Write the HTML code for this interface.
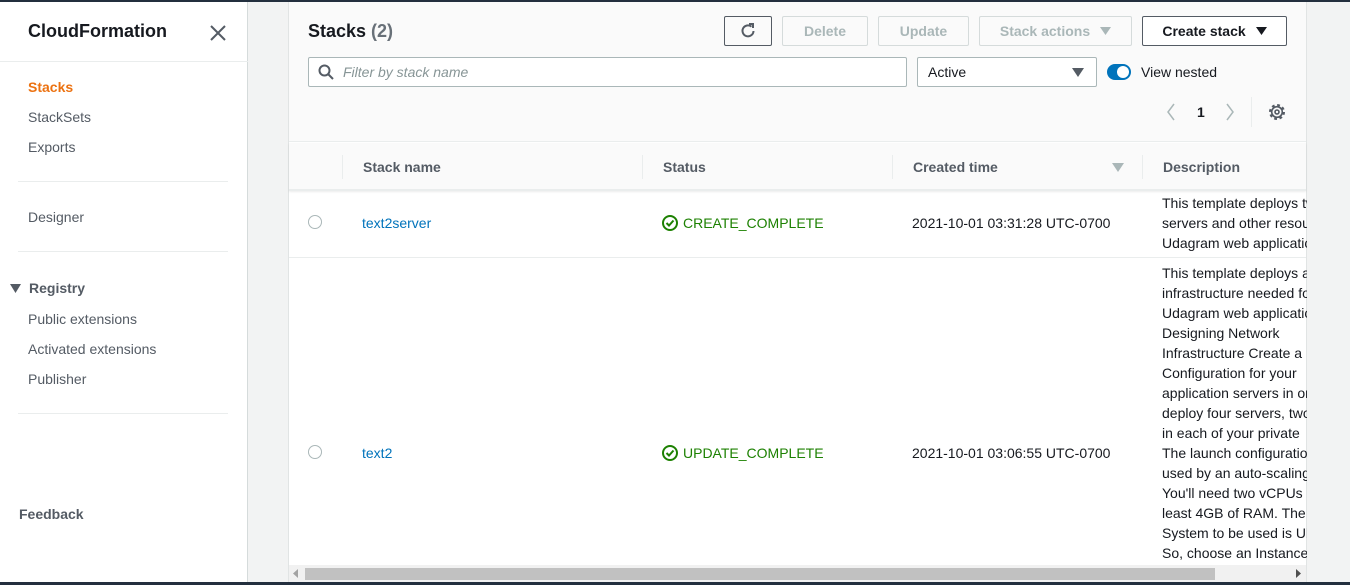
<!DOCTYPE html>
<html><head><meta charset="utf-8"><style>
*{box-sizing:border-box;margin:0;padding:0}
body{width:1350px;height:585px;overflow:hidden;background:#f2f3f3;font-family:"Liberation Sans",sans-serif;font-size:14px;color:#16191f;position:relative}
.a{position:absolute;white-space:nowrap}
.nav{color:#545b64}
.btn{position:absolute;top:16px;height:30px;border:1px solid #d5dbdb;border-radius:2px;font-weight:bold;color:#aab7b8;text-align:center;line-height:28px;background:#fafafa}
.btn svg.tri{vertical-align:middle;margin-left:10px;margin-top:-2px}
.desc{position:absolute;left:1162px;width:145px;overflow:hidden;white-space:nowrap;line-height:20px;color:#16191f}
</style></head><body>
<div class="a" style="left:0;top:0;width:1350px;height:2px;background:#232f3e"></div>
<div class="a" style="left:0;top:2px;width:248px;height:580px;background:#fff;border-right:1px solid #d5dbdb"></div>
<div class="a" style="left:28px;top:21px;font-size:18px;font-weight:bold">CloudFormation</div>
<svg class="a" style="left:210px;top:25px" width="16" height="16"><path d="M1 1L15 15M15 1L1 15" stroke="#545b64" stroke-width="2"/></svg>
<div class="a" style="left:0;top:61px;width:248px;height:1px;background:#eaeded"></div>
<div class="a" style="left:28px;top:79px;color:#ec7211;font-weight:bold">Stacks</div>
<div class="a nav" style="left:28px;top:109px">StackSets</div>
<div class="a nav" style="left:28px;top:139px">Exports</div>
<div class="a" style="left:18px;top:181px;width:210px;height:1px;background:#eaeded"></div>
<div class="a nav" style="left:28px;top:209px">Designer</div>
<div class="a" style="left:18px;top:251px;width:210px;height:1px;background:#eaeded"></div>
<svg class="a" style="left:10px;top:284px" width="11" height="9"><path d="M0 0H11L5.5 9Z" fill="#545b64"/></svg>
<div class="a" style="left:29px;top:280px;font-weight:bold;color:#545b64">Registry</div>
<div class="a nav" style="left:28px;top:311px">Public extensions</div>
<div class="a nav" style="left:28px;top:341px">Activated extensions</div>
<div class="a nav" style="left:28px;top:371px">Publisher</div>
<div class="a" style="left:18px;top:413px;width:210px;height:1px;background:#eaeded"></div>
<div class="a" style="left:19px;top:506px;font-weight:bold;color:#545b64">Feedback</div>

<div class="a" style="left:288px;top:2px;width:1019px;height:580px;background:#fff;border-left:1px solid #e1e4e4;border-right:1px solid #e1e4e4"></div>
<div class="a" style="left:289px;top:2px;width:1017px;height:140px;background:#fafafa;border-bottom:1px solid #eaeded"></div>
<div class="a" style="left:308px;top:21px;font-size:18px;font-weight:bold">Stacks <span style="color:#687078">(2)</span></div>
<div class="btn" style="left:724px;width:48px;border-color:#545b64;color:#545b64"><svg width="18" height="18" style="margin-top:5px" viewBox="0 0 18 18"><path d="M14.5 9A5.5 5.5 0 1 1 12.5 4.6" fill="none" stroke="#545b64" stroke-width="2"/><path d="M10 2H14V6" fill="none" stroke="#545b64" stroke-width="2"/></svg></div>
<div class="btn" style="left:782px;width:86px">Delete</div>
<div class="btn" style="left:878px;width:91px">Update</div>
<div class="btn" style="left:979px;width:153px">Stack actions<svg class="tri" width="11" height="8"><path d="M0 0H11L5.5 8Z" fill="#aab7b8"/></svg></div>
<div class="btn" style="left:1142px;width:145px;border-color:#545b64;color:#16191f;background:#fff">Create stack<svg class="tri" width="11" height="8"><path d="M0 0H11L5.5 8Z" fill="#16191f"/></svg></div>
<div class="a" style="left:308px;top:57px;width:599px;height:30px;border:1px solid #aab7b8;border-radius:2px;background:#fff"></div>
<svg class="a" style="left:318px;top:64px" width="16" height="16"><circle cx="6.5" cy="6.5" r="5" fill="none" stroke="#545b64" stroke-width="2"/><path d="M10 10L15 15" stroke="#545b64" stroke-width="2"/></svg>
<div class="a" style="left:343px;top:64px;color:#879596;font-style:italic">Filter by stack name</div>
<div class="a" style="left:917px;top:57px;width:180px;height:30px;border:1px solid #aab7b8;border-radius:2px;background:#fff"></div>
<div class="a" style="left:928px;top:64px">Active</div>
<svg class="a" style="left:1072px;top:68px" width="12" height="9"><path d="M0 0H12L6 9Z" fill="#545b64"/></svg>
<div class="a" style="left:1107px;top:64px;width:24px;height:16px;border-radius:8px;background:#0073bb"></div>
<div class="a" style="left:1117px;top:66px;width:12px;height:12px;border-radius:6px;background:#fff"></div>
<div class="a" style="left:1141px;top:64px">View nested</div>
<svg class="a" style="left:1166px;top:103px" width="10" height="18"><path d="M8 1L2 9L8 17" fill="none" stroke="#aab7b8" stroke-width="1.5"/></svg>
<div class="a" style="left:1197px;top:104px;font-weight:bold">1</div>
<svg class="a" style="left:1225px;top:103px" width="10" height="18"><path d="M2 1L8 9L2 17" fill="none" stroke="#aab7b8" stroke-width="1.5"/></svg>
<div class="a" style="left:1251px;top:97px;width:1px;height:30px;background:#eaeded"></div>
<svg class="a" style="left:1267px;top:102px" width="20" height="20" viewBox="0 0 20 20"><circle cx="10" cy="10" r="6.5" fill="none" stroke="#545b64" stroke-width="3" stroke-dasharray="2.6 2.5"/><circle cx="10" cy="10" r="5.3" fill="none" stroke="#545b64" stroke-width="1.6"/><circle cx="10" cy="10" r="2" fill="none" stroke="#545b64" stroke-width="1.6"/></svg>

<div class="a" style="left:289px;top:143px;width:1017px;height:48px;background:#fafafa;border-bottom:2px solid #eaeded;box-shadow:0 1px 2px rgba(0,0,0,.08)"></div>
<div class="a" style="left:342px;top:155px;width:1px;height:24px;background:#eaeded"></div>
<div class="a" style="left:642px;top:155px;width:1px;height:24px;background:#eaeded"></div>
<div class="a" style="left:892px;top:155px;width:1px;height:24px;background:#eaeded"></div>
<div class="a" style="left:1142px;top:155px;width:1px;height:24px;background:#eaeded"></div>
<div class="a" style="left:363px;top:159px;font-weight:bold;color:#545b64">Stack name</div>
<div class="a" style="left:663px;top:159px;font-weight:bold;color:#545b64">Status</div>
<div class="a" style="left:913px;top:159px;font-weight:bold;color:#545b64">Created time</div>
<svg class="a" style="left:1112px;top:163px" width="12" height="9"><path d="M0 0H12L6 9Z" fill="#aab7b8"/></svg>
<div class="a" style="left:1163px;top:159px;font-weight:bold;color:#545b64">Description</div>

<div class="a" style="left:308px;top:215px;width:14px;height:14px;border-radius:7px;border:1px solid #aab7b8;background:#fff"></div>
<div class="a" style="left:362px;top:215px;color:#0073bb">text2server</div>
<svg class="a" style="left:662px;top:215px" width="16" height="16"><circle cx="8" cy="8" r="7" fill="none" stroke="#1d8102" stroke-width="2"/><path d="M4.5 8L7 10.5L11.5 5.5" fill="none" stroke="#1d8102" stroke-width="2"/></svg>
<div class="a" style="left:683px;top:215px;color:#1d8102">CREATE_COMPLETE</div>
<div class="a" style="left:912px;top:215px">2021-10-01 03:31:28 UTC-0700</div>
<div class="desc" style="top:193px">This template deploys two<br>servers and other resources<br>Udagram web application</div>
<div class="a" style="left:289px;top:257px;width:1017px;height:1px;background:#eaeded"></div>

<div class="a" style="left:308px;top:445px;width:14px;height:14px;border-radius:7px;border:1px solid #aab7b8;background:#fff"></div>
<div class="a" style="left:362px;top:445px;color:#0073bb">text2</div>
<svg class="a" style="left:662px;top:445px" width="16" height="16"><circle cx="8" cy="8" r="7" fill="none" stroke="#1d8102" stroke-width="2"/><path d="M4.5 8L7 10.5L11.5 5.5" fill="none" stroke="#1d8102" stroke-width="2"/></svg>
<div class="a" style="left:683px;top:445px;color:#1d8102">UPDATE_COMPLETE</div>
<div class="a" style="left:912px;top:445px">2021-10-01 03:06:55 UTC-0700</div>
<div class="desc" style="top:263px">This template deploys all<br>infrastructure needed for<br>Udagram web application<br>Designing Network<br>Infrastructure Create a<br>Configuration for your<br>application servers in order<br>deploy four servers, two<br>in each of your private<br>The launch configuration<br>used by an auto-scaling<br>You'll need two vCPUs<br>least 4GB of RAM. The<br>System to be used is Ubuntu<br>So, choose an Instance</div>

<div class="a" style="left:289px;top:565px;width:1017px;height:17px;background:#f1f1f1"></div>
<div class="a" style="left:305px;top:568px;width:910px;height:12px;background:#c1c1c1"></div>
<svg class="a" style="left:293px;top:569px" width="5" height="9"><path d="M5 0V9L0 4.5Z" fill="#a3a3a3"/></svg>
<svg class="a" style="left:1296px;top:569px" width="5" height="9"><path d="M0 0V9L5 4.5Z" fill="#505050"/></svg>
<div class="a" style="left:0;top:582px;width:1350px;height:3px;background:#232f3e"></div>
</body></html>
